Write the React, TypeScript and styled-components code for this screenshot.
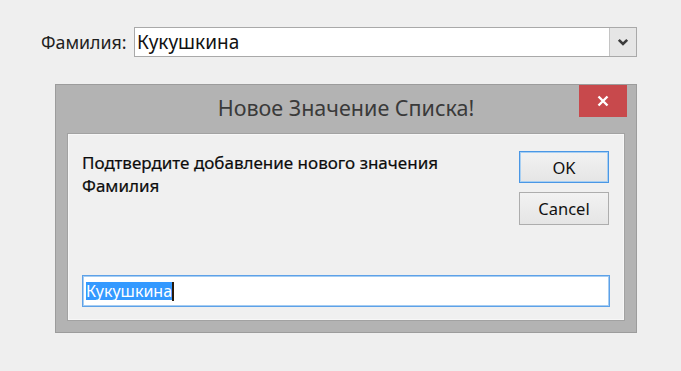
import React from 'react'
import styled, { createGlobalStyle } from 'styled-components'

const GlobalStyle = createGlobalStyle`
  html, body {
    margin: 0;
    padding: 0;
    background: #efefef;
  }
  body {
    font-family: 'Noto Sans', 'Open Sans', sans-serif;
    color: #1b1b1b;
  }
`

const Page = styled.div`
  width: 681px;
  height: 371px;
  padding-top: 27px;
  box-sizing: border-box;
  overflow: hidden;
`

const FieldRow = styled.div`
  display: flex;
  align-items: center;
  margin-left: 41px;
`

const Label = styled.span`
  width: 93px;
  font-size: 17.8px;
  line-height: 30px;
  color: #1e1e1e;
`

const Combo = styled.div`
  display: flex;
  width: 503px;
  height: 30px;
  box-sizing: border-box;
  border: 1px solid #a9a9a9;
  background: #fff;
`

const ComboText = styled.div`
  flex: 1;
  padding-left: 2px;
  font-size: 19px;
  line-height: 28px;
  color: #111;
`

const ComboButton = styled.div`
  width: 26px;
  display: flex;
  align-items: center;
  justify-content: center;
  background: #e6e6e6;
  border-left: 1px solid #c4c4c4;
`

const Dialog = styled.div`
  margin: 27px 0 0 55px;
  width: 582px;
  height: 249px;
  box-sizing: border-box;
  background: #b3b3b3;
  border: 1px solid #9c9c9c;
  display: flex;
  flex-direction: column;
`

const TitleBar = styled.div`
  height: 48px;
  display: grid;
  grid-template-columns: 48px 1fr 48px;
  padding: 0 9px;
`

const Title = styled.div`
  align-self: center;
  text-align: center;
  font-size: 21.5px;
  color: #3a3a3a;
  padding-bottom: 4px;
`

const CloseButton = styled.div`
  height: 32px;
  background: #c8494c;
  display: flex;
  align-items: center;
  justify-content: center;
`

const Client = styled.div`
  flex: 1;
  margin: 0 11px 11px;
  border: 1px solid #a2a2a2;
  box-shadow: inset 0 0 0 1px #f7f7f7;
  background: #f0f0f0;
  padding: 17px 14px 13px;
  display: flex;
  flex-direction: column;
`

const Body = styled.div`
  display: flex;
  justify-content: space-between;
`

const Message = styled.div`
  padding: 0 0 0 0;
  font-size: 17px;
  line-height: 23px;
  color: #0c0c0c;
  -webkit-text-stroke: 0.2px #0c0c0c;
`

const Buttons = styled.div`
  display: flex;
  flex-direction: column;
  gap: 9px;
  margin-right: 1px;
`

const Button = styled.div<{ focused?: boolean }>`
  width: 90px;
  height: ${({ focused }) => (focused ? '32px' : '33px')};
  box-sizing: border-box;
  border: 1px solid ${({ focused }) => (focused ? '#4a97e5' : '#adadad')};
  box-shadow: ${({ focused }) => (focused ? 'inset 0 0 0 1px #a8cff2' : 'none')};
  background: linear-gradient(#f2f2f2, #e5e5e5);
  display: flex;
  align-items: center;
  justify-content: center;
  font-size: 16.5px;
  color: #111;
`

const Input = styled.div`
  margin-top: auto;
  height: 32px;
  box-sizing: border-box;
  border: 1px solid #5da1e8;
  box-shadow: inset 0 0 0 1px #a6cdf2;
  background: #fff;
  display: flex;
  align-items: center;
  padding-left: 3px;
`

const Selected = styled.span`
  background: #3399ff;
  color: #fff;
  font-size: 16px;
  line-height: 18px;
`

const Caret = styled.span`
  width: 2px;
  height: 19px;
  background: #2a1a0a;
`

export default function App() {
  return (
    <Page>
      <GlobalStyle />
      <FieldRow>
        <Label>Фамилия:</Label>
        <Combo>
          <ComboText>Кукушкина</ComboText>
          <ComboButton>
            <svg width="12" height="9" viewBox="0 0 12 9">
              <polyline points="1.8,1.8 6,6 10.2,1.8" fill="none" stroke="#3c3c3c" strokeWidth="2.6" />
            </svg>
          </ComboButton>
        </Combo>
      </FieldRow>
      <Dialog>
        <TitleBar>
          <span />
          <Title>Новое Значение Списка!</Title>
          <CloseButton>
            <svg width="12" height="12" viewBox="0 0 12 12">
              <path d="M1.5 1.5 L10.5 10.5 M10.5 1.5 L1.5 10.5" stroke="#fff" strokeWidth="2.4" />
            </svg>
          </CloseButton>
        </TitleBar>
        <Client>
          <Body>
            <Message>
              Подтвердите добавление нового значения
              <br />
              Фамилия
            </Message>
            <Buttons>
              <Button focused>OK</Button>
              <Button>Cancel</Button>
            </Buttons>
          </Body>
          <Input>
            <Selected>Кукушкина</Selected>
            <Caret />
          </Input>
        </Client>
      </Dialog>
    </Page>
  )
}
